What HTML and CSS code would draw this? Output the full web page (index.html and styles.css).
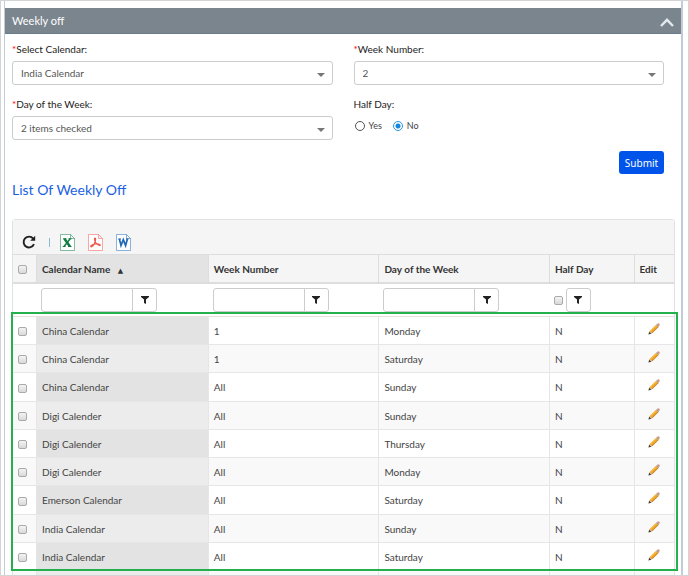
FILE: index.html
```html
<!DOCTYPE html>
<html lang="en">
<head>
<meta charset="utf-8">
<title>Weekly off</title>
<link rel="stylesheet" href="styles.css">
</head>
<body>
<svg class="defs" aria-hidden="true">
  <symbol id="pencil" viewBox="0 0 12 12">
    <path d="M0.4 11.6 L1.2 8.5 L3.5 10.8 Z" fill="#4a4038"/>
    <path d="M1.2 8.5 L2.2 7.5 L4.5 9.8 L3.5 10.8 Z" fill="#d9b088"/>
    <path d="M2 7.7 L8.2 1.7 L10.3 3.9 L4.2 10 Z" fill="#f0a020"/>
    <path d="M2.7 8.4 L8.9 2.4" stroke="#ffc94d" stroke-width="0.8"/>
    <path d="M4.2 10 L10.3 3.9" stroke="#a8701c" stroke-width="0.7"/>
    <path d="M8.2 1.7 L9.1 0.9 L11.2 3 L10.3 3.9 Z" fill="#8d9498"/>
    <path d="M9.1 0.9 Q10.2 -0.1 11.3 0.7 Q12.2 1.9 11.2 3 Z" fill="#e08a72"/>
  </symbol>
  <symbol id="funnel" viewBox="0 0 8 8">
    <path d="M0 0 H8 V1 L5 3.6 V8 L3 7 V3.6 L0 1 Z" fill="#222"/>
  </symbol>
  <symbol id="page" viewBox="0 0 15 17">
    <path d="M0.5 0.5 H10.5 L14.5 4.5 V16.5 H0.5 Z M10.5 0.5 V4.5 H14.5" fill="#fff" stroke="currentColor" stroke-opacity="0.5"/>
  </symbol>
</svg>
<div class="frame">
<main class="panel">
  <header class="panel-head">
    <h1>Weekly off</h1>
    <button class="collapse" type="button" aria-label="Collapse">
      <svg viewBox="0 0 14 9"><path d="M1 8 L7 1.8 L13 8" fill="none" stroke="#e3e8ee" stroke-width="2.4"/></svg>
    </button>
  </header>
  <form class="form">
    <div class="field">
      <label for="calendar"><span class="req">*</span>Select Calendar:</label>
      <div class="select"><select id="calendar"><option>India Calendar</option></select></div>
    </div>
    <div class="field">
      <label for="week"><span class="req">*</span>Week Number:</label>
      <div class="select"><select id="week"><option>2</option></select></div>
    </div>
    <div class="field">
      <label for="day"><span class="req">*</span>Day of the Week:</label>
      <div class="select"><select id="day"><option>2 items checked</option></select></div>
    </div>
    <div class="field" role="radiogroup" aria-labelledby="half">
      <span class="caption" id="half">Half Day:</span>
      <div class="radios">
        <label><input type="radio" name="half">Yes</label>
        <label><input type="radio" name="half" checked>No</label>
      </div>
    </div>
    <div class="actions"><button class="submit" type="button">Submit</button></div>
  </form>
  <h2>List Of Weekly Off</h2>
  <section class="list">
    <div class="toolbar">
      <button type="button" aria-label="Refresh">
        <svg class="refresh" viewBox="0 0 14 14"><path d="M12 9.2 A5.4 5.4 0 1 1 11.2 3.6" fill="none" stroke="#222" stroke-width="1.9"/><path d="M13.2 0.8 V5.8 H8.2 Z" fill="#222"/></svg>
      </button>
      <span class="divider"></span>
      <button type="button" class="excel" aria-label="Export to Excel">
        <svg class="doc" viewBox="0 0 15 17"><use href="#page"/><path d="M4.4 4.8 L10 12.5" fill="none" stroke="currentColor" stroke-width="2.4"/><path d="M10.2 4.8 L4 12.5" stroke="currentColor" stroke-width="1.5"/><path d="M3 4.8 H6.4 M8.5 4.8 H11.5 M2.8 12.5 H5.5 M8 12.5 H11.5" stroke="currentColor"/></svg>
      </button>
      <button type="button" class="pdf" aria-label="Export to PDF">
        <svg class="doc" viewBox="0 0 15 17"><use href="#page"/><path d="M7 4 C8 4 7.6 6.5 7 8 C6 10.5 4.4 13 3 12.8 C1.8 12 4.5 10.5 7 10 C9.5 9.6 12.5 10 12.3 11.2 C11.5 12.2 8.4 10.2 7.4 8 C6.5 6.2 6.2 4 7 4 Z" fill="none" stroke="currentColor" stroke-width="1.2"/></svg>
      </button>
      <button type="button" class="word" aria-label="Export to Word">
        <svg class="doc" viewBox="0 0 15 17"><use href="#page"/><path d="M3.4 5 L5 11.5 L7.3 5.6 L9.6 11.5 L11.4 5" fill="none" stroke="currentColor" stroke-width="1.7"/><path d="M2.2 5 H5 M10 5 H12.6" stroke="currentColor"/></svg>
      </button>
    </div>
    <table>
      <colgroup><col class="c-check"><col class="c-name"><col class="c-wide"><col class="c-wide"><col class="c-half"><col></colgroup>
      <thead>
        <tr class="titles">
          <th><input type="checkbox" aria-label="Select all"></th>
          <th class="sorted">Calendar Name <span class="sort">▲</span></th>
          <th>Week Number</th><th>Day of the Week</th><th>Half Day</th><th>Edit</th>
        </tr>
        <tr class="filters">
          <td></td>
          <td><div class="filter"><input type="text" aria-label="Filter calendar name"><button type="button" aria-label="Filter"><svg><use href="#funnel"/></svg></button></div></td>
          <td><div class="filter"><input type="text" aria-label="Filter week number"><button type="button" aria-label="Filter"><svg><use href="#funnel"/></svg></button></div></td>
          <td><div class="filter"><input type="text" aria-label="Filter day of the week"><button type="button" aria-label="Filter"><svg><use href="#funnel"/></svg></button></div></td>
          <td><div class="filter flag"><input type="checkbox" aria-label="Filter half day"><button type="button" aria-label="Filter"><svg><use href="#funnel"/></svg></button></div></td>
          <td></td>
        </tr>
      </thead>
      <tbody id="rows"></tbody>
    </table>
    <div class="highlight"></div>
  </section>
</main>
</div>
<script src="rows.js"></script>
</body>
</html>
```
FILE: styles.css
```css
* { box-sizing: border-box; }
body {
  margin: 0;
  font: 10px/16px Lato, "Liberation Sans", sans-serif;
  color: #333;
  background: #fff;
}
.defs { position: absolute; width: 0; height: 0; }
button, input, select { font: inherit; margin: 0; }
button { padding: 0; border: 0; background: none; color: inherit; }
.frame {
  height: 100vh;
  overflow: hidden;
  border: 1px solid #d4d4d4;
  padding: 0 5px 0 3px;
}
.panel {
  min-height: 100%;
  padding-top: 7px;
  border: solid #c1cbd9;
  border-width: 0 2px 0 1px;
}
.panel-head {
  display: flex;
  align-items: center;
  justify-content: space-between;
  height: 26px;
  padding: 0 7px;
  background: #7b858e;
  border-bottom: 1px solid #687b8d;
  color: #fff;
}
h1 { margin: 0; font-size: 11px; font-weight: 400; }
.collapse { display: flex; padding-top: 4px; }
.collapse svg { width: 14px; height: 9px; }
.form {
  display: grid;
  grid-template-columns: 320fr 310fr;
  column-gap: 21px;
  padding: 7px 17px 0 7px;
}
.field { height: 55px; }
.field > label, .caption { display: block; height: 20px; color: #222; }
.req { color: #f00; }
.select { position: relative; }
.select::after {
  content: "";
  position: absolute;
  right: 8px;
  top: 12px;
  border: 4px solid transparent;
  border-top-color: #777;
  border-bottom: 0;
}
select {
  appearance: none;
  display: block;
  width: 100%;
  height: 24px;
  padding: 0 8px;
  border: 1px solid #ccc;
  border-radius: 3px;
  background: #fff;
  color: #555;
}
.radios { display: flex; gap: 10px; padding-top: 2px; font-size: 9px; color: #444; }
.radios label { display: flex; align-items: center; gap: 4px; }
[type="radio"] {
  appearance: none;
  width: 10px;
  height: 10px;
  margin-left: 1px;
  border: 1px solid #555;
  border-radius: 50%;
}
[type="radio"]:checked {
  border-color: #2a96e0;
  background: radial-gradient(#1486dc 0 2px, #fff 3px);
}
.actions { grid-column: 2; display: flex; justify-content: flex-end; }
.submit {
  width: 45px;
  height: 23px;
  border-radius: 3px;
  background: #0054ea;
  color: #fff;
  font: 10px/16px "Noto Sans", sans-serif;
}
h2 {
  margin: 6px 7px 19px;
  font-size: 14px;
  line-height: 20px;
  font-weight: 400;
  color: #1b5fe4;
}
.list {
  position: relative;
  margin: 0 6px 0 7px;
  border: 1px solid #e2e2e2;
  border-radius: 3px 3px 0 0;
}
.toolbar {
  display: flex;
  align-items: center;
  gap: 13px;
  height: 34px;
  padding: 10px 9px 0;
  background: #f5f5f5;
}
.toolbar button { display: flex; }
.refresh { width: 14px; height: 14px; }
.doc { width: 15px; height: 17px; }
.divider { width: 1px; height: 9px; margin: 0 -3px 0 0; background: #8fb7d8; }
.excel { color: #107c41; }
.pdf { color: #f0574a; }
.word { color: #2069b8; }
table { width: 100%; table-layout: fixed; border-collapse: separate; border-spacing: 0; }
.c-check { width: 23px; }
.c-name { width: 26%; }
.c-wide { width: 25.8%; }
.c-half { width: 12.8%; }
th, td { padding: 0 0 0 5px; text-align: left; color: #444; }
th {
  height: 30px;
  border: solid #ddd;
  border-width: 1px 0 2px 1px;
  background: #f5f5f5;
  font-weight: 700;
  color: #333;
}
th:first-child, td:first-child { border-left: 0; }
.titles .sorted { background: #e3e3e3; }
.sort { margin-left: 5px; font: 7px/10px "DejaVu Sans", sans-serif; }
.filters td { height: 33px; border-bottom: 1px solid #e2e2e2; border-left: 0; }
.filter { display: flex; height: 24px; }
.filter [type="text"] {
  width: 92px;
  border: 1px solid #ccc;
  border-radius: 3px 0 0 3px;
}
.filter button {
  display: flex;
  align-items: center;
  justify-content: center;
  width: 25px;
  margin-left: -1px;
  border: 1px solid #ccc;
  border-radius: 0 3px 3px 0;
}
.filter svg { width: 8px; height: 8px; }
.filter.flag { align-items: center; gap: 4px; }
.filter.flag button { height: 24px; border-radius: 3px; }
[type="checkbox"] {
  appearance: none;
  display: block;
  width: 9px;
  height: 9px;
  border: 1px solid #aaa;
  border-radius: 2px;
  background: linear-gradient(#f3f3f3, #d9d9d9);
}
th [type="checkbox"], tbody [type="checkbox"] { margin-top: 2px; }
tbody td { height: 28px; border: solid #e6e6e6; border-width: 0 0 1px 1px; }
tbody tr:nth-child(4n+3) td { height: 29px; }
tbody tr:nth-child(even) { background: #f9f9f9; }
tbody .name { background: #e3e3e3; }
tbody tr:nth-child(even) .name { background: #ececec; }
.edit { display: flex; margin-left: 8px; padding-bottom: 4px; }
.edit svg { width: 12px; height: 12px; }
.highlight {
  position: absolute;
  inset: 92px -4px 28px -2px;
  border: 2px solid #22b14c;
  pointer-events: none;
}
```
FILE: rows.js
```js
const rows = [
  ["China Calendar", "1", "Monday"],
  ["China Calendar", "1", "Saturday"],
  ["China Calendar", "All", "Sunday"],
  ["Digi Calender", "All", "Sunday"],
  ["Digi Calender", "All", "Thursday"],
  ["Digi Calender", "All", "Monday"],
  ["Emerson Calendar", "All", "Saturday"],
  ["India Calendar", "All", "Sunday"],
  ["India Calendar", "All", "Saturday"],
  ["", "", ""]
];
document.getElementById("rows").innerHTML = rows.map(([name, week, day]) => `
  <tr>
    <td>${name && '<input type="checkbox" aria-label="Select row">'}</td>
    <td class="name">${name}</td><td>${week}</td><td>${day}</td><td>${name && "N"}</td>
    <td>${name && '<button class="edit" type="button" aria-label="Edit"><svg><use href="#pencil"/></svg></button>'}</td>
  </tr>`).join("");
```
